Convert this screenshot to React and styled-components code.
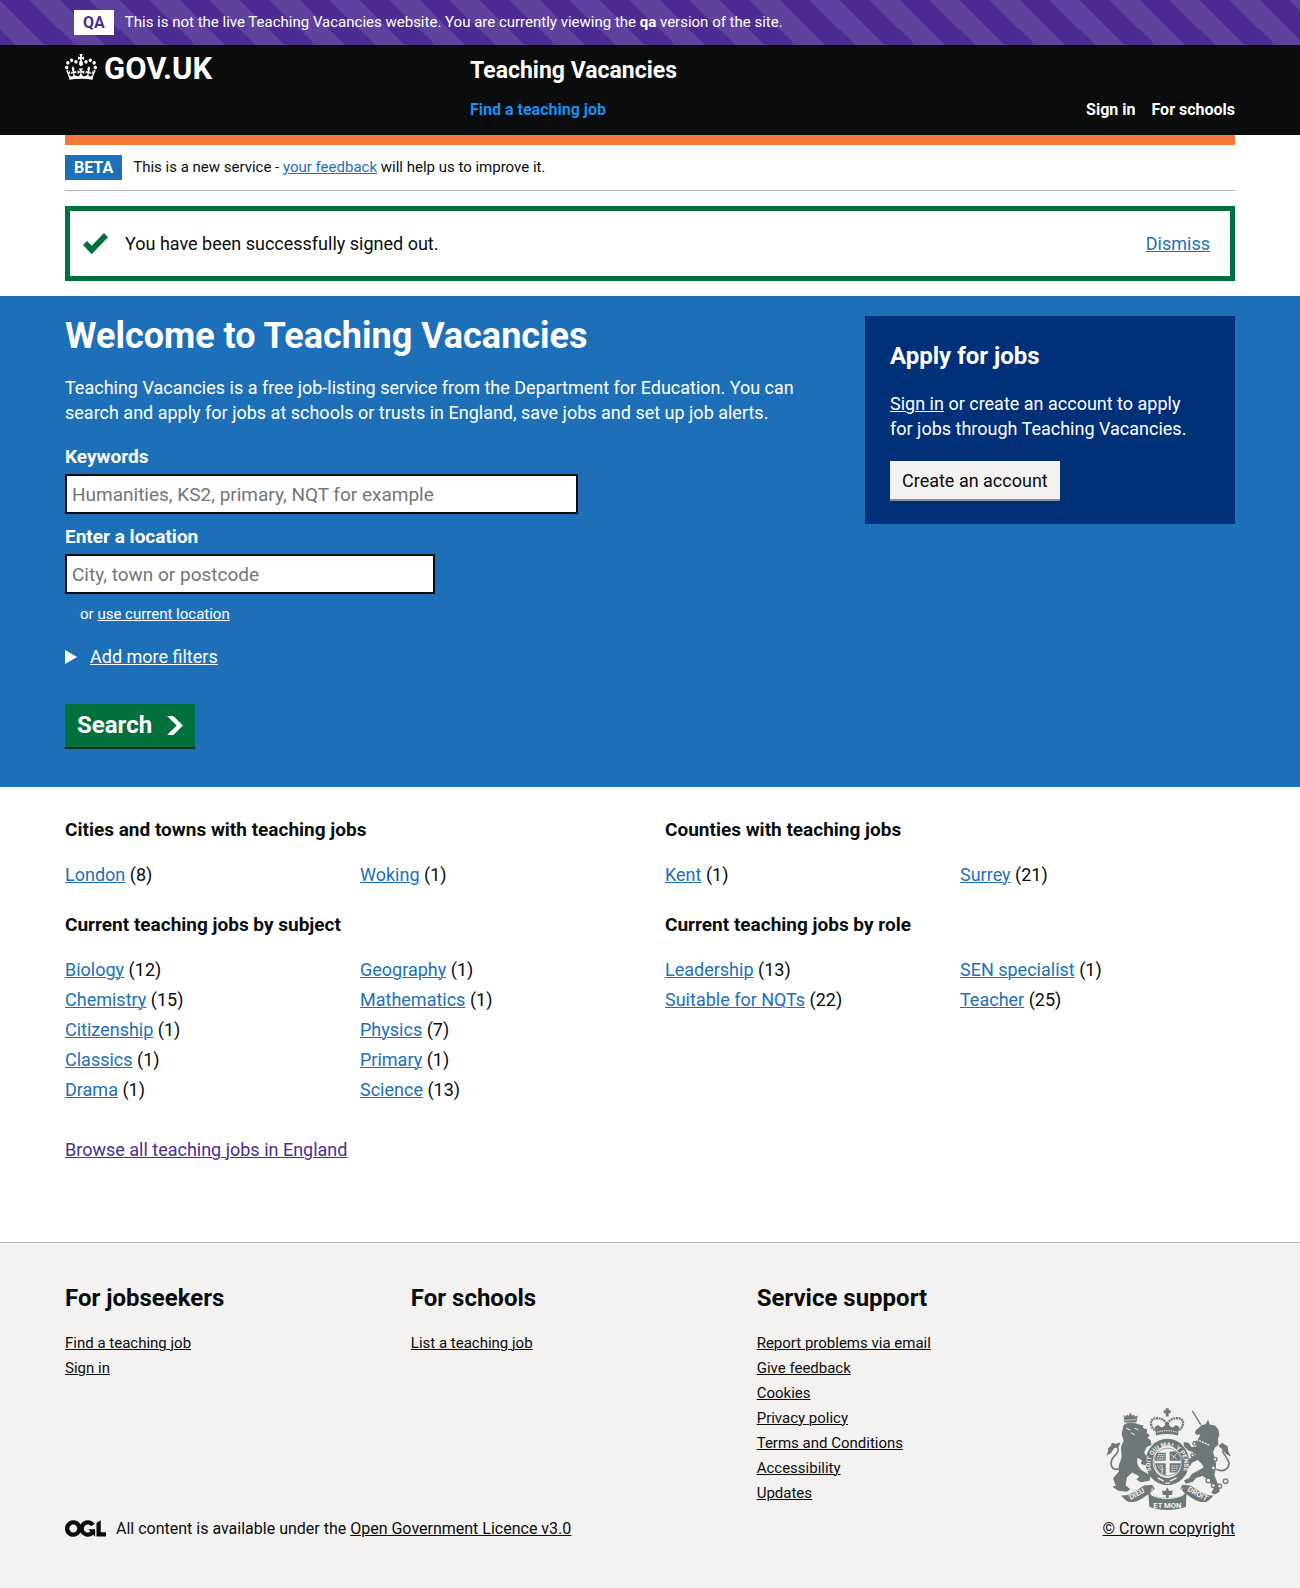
import React from "react";
import styled, { createGlobalStyle, css } from "styled-components";

const color = {
  black: "#0b0c0c",
  white: "#ffffff",
  blue: "#1d70b8",
  darkBlue: "#003078",
  lightBlue: "#1d8feb",
  purple: "#4c2c92",
  green: "#00703c",
  darkGreen: "#002d18",
  orange: "#f47738",
  grey: "#f3f2f1",
  midGrey: "#b1b4b6",
  shadowGrey: "#929191",
  placeholder: "#757575",
  crest: "#6f7779",
};

const Global = createGlobalStyle`
  *, *::before, *::after { box-sizing: border-box; }
  body {
    margin: 0;
    background: ${color.white};
    color: ${color.black};
    font-family: Roboto, "Liberation Sans", sans-serif;
    font-size: 18px;
    line-height: 25px;
  }
  h1, h2, h3, p, ul { margin: 0; padding: 0; }
  ul { list-style: none; }
`;

const Container = styled.div`
  max-width: 1170px;
  margin: 0 auto;
  @media (max-width: 1230px) {
    margin: 0 30px;
  }
`;

const linkColors = {
  blue: color.blue,
  visited: color.purple,
  white: color.white,
  black: color.black,
};

const Link = styled.a`
  color: ${(p) => linkColors[p.$tone || "blue"]};
  text-decoration: underline;
  text-decoration-thickness: 1px;
`;

/* Environment banner */

const EnvBanner = styled.div`
  background-color: ${color.purple};
  background-image: linear-gradient(
    45deg,
    transparent 25%,
    rgba(255, 255, 255, 0.1) 25%,
    rgba(255, 255, 255, 0.1) 50%,
    transparent 50%,
    transparent 75%,
    rgba(255, 255, 255, 0.1) 75%
  );
  background-size: 60px 60px;
  color: ${color.white};
`;

const TagRow = styled.div`
  display: flex;
  align-items: center;
  gap: 11px;
  padding: 10px ${(p) => (p.$inset ? "9px" : "0")};
  font-size: 15px;
`;

const Tag = styled.strong`
  padding: 0 9px;
  font-size: 16px;
  background: ${(p) => (p.$inverse ? color.white : color.blue)};
  color: ${(p) => (p.$inverse ? color.purple : color.white)};
`;

/* Header */

const Header = styled.header`
  background: ${color.black};
  color: ${color.white};
`;

const HeaderGrid = styled(Container)`
  display: grid;
  grid-template-columns: 1fr 2fr;
`;

const Logo = styled.a`
  display: flex;
  align-items: flex-start;
  align-self: start;
  gap: 7px;
  padding-top: 9px;
  color: ${color.white};
  font-size: 31px;
  line-height: 30px;
  font-weight: 700;
  text-decoration: none;
`;

const HeaderContent = styled.div`
  display: flex;
  flex-direction: column;
  gap: 11px;
  padding: 11px 0 13px 15px;
`;

const ServiceName = styled.a`
  color: ${color.white};
  font-size: 23px;
  line-height: 30px;
  font-weight: 700;
  text-decoration: none;
`;

const Nav = styled.nav`
  display: flex;
  gap: 16px;
`;

const NavLink = styled.a`
  color: ${(p) => (p.$active ? color.lightBlue : color.white)};
  font-size: 16px;
  font-weight: 700;
  text-decoration: none;
  ${(p) =>
    p.$active &&
    css`
      margin-right: auto;
    `}
`;

/* Phase banner and notification */

const PhaseBanner = styled(Container)`
  border-top: 10px solid ${color.orange};
  border-bottom: 1px solid ${color.midGrey};
`;

const Notification = styled.div`
  display: flex;
  align-items: center;
  gap: 17px;
  margin: 15px 0;
  padding: 20px 20px 20px 13px;
  border: 5px solid ${color.green};
`;

const NotificationText = styled.p`
  flex: 1;
`;

/* Hero */

const Hero = styled.section`
  padding: 20px 0 40px;
  background: ${color.blue};
  color: ${color.white};
`;

const HeroGrid = styled(Container)`
  display: grid;
  grid-template-columns: repeat(3, 1fr);
  align-items: start;
  column-gap: 30px;
`;

const HeroMain = styled.div`
  grid-column: span 2;
`;

const Title = styled.h1`
  margin-bottom: 19px;
  font-size: 36px;
  line-height: 40px;
`;

const SearchForm = styled.form`
  margin-top: 19px;
`;

const Field = styled.div`
  margin-bottom: 10px;
`;

const Label = styled.label`
  display: block;
  margin-bottom: 5px;
  font-size: 19px;
  font-weight: 700;
`;

const TextInput = styled.input`
  display: block;
  width: ${(p) => (p.$half ? "calc((100% - 30px) / 2)" : "calc(100% * 2 / 3)")};
  height: 40px;
  padding: 5px;
  border: 2px solid ${color.black};
  border-radius: 0;
  background: ${color.white};
  color: ${color.black};
  font: inherit;
  font-size: 19px;
  &::placeholder {
    color: ${color.placeholder};
    opacity: 1;
  }
`;

const Hint = styled.p`
  padding-left: 15px;
  font-size: 15px;
  line-height: 20px;
`;

const Filters = styled.details`
  margin: 20px 0 35px;
`;

const FiltersSummary = styled.summary`
  display: flex;
  align-items: center;
  gap: 13px;
  width: fit-content;
  list-style: none;
  cursor: pointer;
  text-decoration: underline;
  text-decoration-thickness: 1px;
  &::before {
    content: "";
    border: solid transparent;
    border-width: 7px 0 7px 12px;
    border-left-color: currentColor;
  }
`;

const SearchButton = styled.button`
  display: flex;
  align-items: center;
  gap: 15px;
  height: 43px;
  padding: 0 12px;
  border: 0;
  background: ${color.green};
  box-shadow: 0 2px 0 ${color.darkGreen};
  color: ${color.white};
  font: inherit;
  font-size: 24px;
  font-weight: 700;
`;

const ApplyPanel = styled.aside`
  padding: 25px 35px 25px 25px;
  background: ${color.darkBlue};
`;

const PanelTitle = styled.h2`
  margin-bottom: 20px;
  font-size: 24px;
  line-height: 30px;
`;

const CreateButton = styled.button`
  display: block;
  height: 38px;
  margin-top: 20px;
  padding: 0 12px;
  border: 0;
  background: ${color.grey};
  box-shadow: 0 2px 0 ${color.shadowGrey};
  color: ${color.black};
  font: inherit;
`;

/* Job facets */

const FacetSection = styled(Container)`
  padding: 30px 0 80px;
`;

const FacetGrid = styled.div`
  display: grid;
  grid-template-columns: 1fr 1fr;
  gap: 20px 30px;
  margin-bottom: 30px;
`;

const FacetTitle = styled.h3`
  margin-bottom: 20px;
  font-size: 19px;
  line-height: 25px;
`;

const FacetList = styled.ul`
  columns: 2;
  column-gap: 20px;
`;

const FacetItem = styled.li`
  padding-bottom: 5px;
  break-inside: avoid;
`;

/* Footer */

const Footer = styled.footer`
  padding: 40px 0 48px;
  border-top: 1px solid ${color.midGrey};
  background: ${color.grey};
  font-size: 15px;
`;

const FooterRow = styled(Container)`
  display: flex;
  align-items: flex-end;
`;

const FooterMain = styled.div`
  flex: 1;
`;

const FooterNav = styled.div`
  display: grid;
  grid-template-columns: repeat(3, 1fr);
  margin-bottom: 10px;
`;

const FooterTitle = styled.h2`
  margin-bottom: 18px;
  font-size: 24px;
  line-height: 30px;
`;

const Licence = styled.div`
  display: flex;
  align-items: center;
  gap: 10px;
  font-size: 16px;
`;

const Copyright = styled.a`
  display: flex;
  flex-direction: column;
  align-items: center;
  gap: 6px;
  color: ${color.black};
  font-size: 16px;
  text-decoration-thickness: 1px;
`;

/* Drawings */

const Crown = () => (
  <svg width="32" height="26" viewBox="0 0 132 97" preserveAspectRatio="none" aria-hidden="true">
    <path
      fill="currentColor"
      fillRule="evenodd"
      d="M25 30.2c3.5 1.5 7.7-.2 9.1-3.7 1.5-3.6-.2-7.8-3.9-9.2-3.6-1.4-7.6.3-9.1 3.9-1.4 3.5.3 7.5 3.9 9zM9 39.5c3.6 1.5 7.8-.2 9.2-3.7 1.5-3.6-.2-7.8-3.9-9.1-3.6-1.5-7.6.2-9.1 3.8-1.4 3.5.3 7.5 3.8 9zM4.4 57.2c3.5 1.5 7.7-.2 9.1-3.8 1.5-3.6-.2-7.7-3.9-9.1-3.5-1.5-7.6.3-9.1 3.8-1.4 3.5.3 7.6 3.9 9.1zm38.3-21.4c3.5 1.5 7.7-.2 9.1-3.8 1.5-3.6-.2-7.7-3.9-9.1-3.6-1.5-7.6.3-9.1 3.8-1.3 3.6.4 7.7 3.9 9.1zm64.4-5.6c-3.6 1.5-7.8-.2-9.1-3.7-1.5-3.6.2-7.8 3.8-9.2 3.6-1.4 7.7.3 9.2 3.9 1.3 3.5-.4 7.5-3.9 9zm15.9 9.3c-3.6 1.5-7.7-.2-9.1-3.7-1.5-3.6.2-7.8 3.7-9.1 3.6-1.5 7.7.2 9.2 3.8 1.5 3.5-.3 7.5-3.8 9zm4.7 17.7c-3.6 1.5-7.8-.2-9.2-3.8-1.5-3.6.2-7.7 3.9-9.1 3.6-1.5 7.7.3 9.2 3.8 1.3 3.5-.4 7.6-3.9 9.1zM89.3 35.8c-3.6 1.5-7.8-.2-9.2-3.8-1.4-3.6.2-7.7 3.9-9.1 3.6-1.5 7.7.3 9.2 3.8 1.4 3.6-.3 7.7-3.9 9.1zM69.7 17.7l8.9 4.7V9.3l-8.9 2.8c-.2-.3-.5-.6-.9-.9L72.4 0H59.6l3.5 11.2c-.3.3-.6.5-.9.9l-8.8-2.8v13.1l8.8-4.7c.3.3.6.7.9.9l-5 15.4v.1c-.2.8-.4 1.6-.4 2.4 0 4.1 3.1 7.5 7 8.1h.2c.3 0 .7.1 1 .1.4 0 .7 0 1-.1h.2c4-.6 7.1-4.1 7.1-8.1 0-.8-.1-1.7-.4-2.4V34l-5.1-15.4c.4-.2.7-.6 1-.9zM66 92.8c16.9 0 32.8 1.1 47.1 3.2 4-16.9 8.9-26.7 14-33.5l-9.6-3.4c1 4.9 1.1 7.2 0 10.2-1.5-1.4-3-4.3-4.2-8.7L108.6 76c2.8-2 5-3.2 7.5-3.3-4.4 9.4-10 11.9-13.6 11.2-4.3-.8-6.3-4.6-5.6-7.9 1-4.7 5.7-5.9 8-.5 4.3-8.7-3-11.4-7.6-8.8 7.1-7.2 7.9-13.5 2.1-21.1-8 6.1-8.1 12.3-4.5 20.8-4.7-5.4-12.1-2.5-9.5 6.2 3.4-5.2 7.9-2 7.2 3.1-.6 4.3-6.4 7.8-13.5 7.2-10.3-.9-10.9-8-11.2-13.8 2.5-.5 7.1 1.8 11 7.3L80.2 60c-4.1 4.4-8 5.3-12.3 5.4 1.4-4.4 8-11.6 8-11.6H55.5s6.4 7.2 7.9 11.6c-4.2-.1-8-1-12.3-5.4l1.4 16.4c3.9-5.5 8.5-7.7 10.9-7.3-.3 5.8-.9 12.8-11.1 13.8-7.2.6-12.9-2.9-13.5-7.2-.7-5 3.8-8.3 7.1-3.1 2.7-8.7-4.6-11.6-9.4-6.2 3.7-8.5 3.6-14.7-4.6-20.8-5.8 7.6-5 13.9 2.2 21.1-4.7-2.6-11.9.1-7.7 8.8 2.3-5.5 7.1-4.2 8.1.5.7 3.3-1.3 7.1-5.7 7.9-3.5.7-9-1.8-13.5-11.2 2.5.1 4.7 1.3 7.5 3.3l-4.7-15.4c-1.2 4.4-2.7 7.2-4.3 8.7-1.1-3-.9-5.3 0-10.2l-9.5 3.4c5 6.9 9.9 16.7 14 33.5 14.8-2.1 30.8-3.2 47.7-3.2z"
    />
  </svg>
);

const Tick = () => (
  <svg width="25" height="25" viewBox="0 0 25 25" aria-hidden="true">
    <path fill={color.green} d="M25,6.2L8.7,23.2L0,14.1l4-4.2l4.7,4.9L21,2L25,6.2z" />
  </svg>
);

const Chevron = () => (
  <svg width="16" height="19" viewBox="0 0 33 40" preserveAspectRatio="none" aria-hidden="true">
    <path fill="currentColor" d="M0 0h13l20 20-20 20H0l20-20z" />
  </svg>
);

const OglLogo = () => (
  <svg width="41" height="17" viewBox="0 0 483.2 195.7" role="img" aria-label="OGL">
    <path
      fill="currentColor"
      d="M421.5 142.8V.1l-50.7 32.3v161.1h112.4v-50.7zm-122.3-9.6A47.12 47.12 0 0 1 221 97.8c0-26 21.1-47.1 47.1-47.1 16.7 0 31.4 8.7 39.7 21.8l42.7-27.2A97.63 97.63 0 0 0 268.1 0c-36.5 0-68.3 20.1-85.1 49.7A98 98 0 0 0 97.8 0C43.9 0 0 43.9 0 97.8s43.9 97.8 97.8 97.8c36.5 0 68.3-20.1 85.1-49.7a97.76 97.76 0 0 0 149.6 25.4l19.4 22.2h3v-87.8h-80l24.3 27.5zM97.8 145c-26 0-47.1-21.1-47.1-47.1s21.1-47.1 47.1-47.1 47.1 21.1 47.1 47.1S123.8 145 97.8 145"
    />
  </svg>
);

const CrestLetters = styled.text`
  fill: ${color.grey};
  font-size: ${(p) => (p.$small ? "19px" : "23px")};
  font-weight: 700;
  text-anchor: middle;
`;

const Crest = () => (
  <svg width="125" height="102" viewBox="50 47 375 308" aria-hidden="true" fill={color.crest}>
    {/* lion */}
    <path d="M102 98C112 90 132 90 146 96l16 4-2 7 14 6-3 8 10 9-7 7 10 8 2 14-14 6-8 16 8 14 6 20-8 6-16-5 3-11-13-8c-4 16 2 30 16 40l24 14-4 16-26 4-14-8 10-9-22-12-16 14-4 24 14 12-10 8-26-3-18-12 10-4-8-21 18-22c-4-14 4-28 8-42l-2-32 8-18-6-20z" />
    <path d="M103 70l5 4 5-6 4 4 6-8 5 8 5-4 3 6 7-3-3 18-34 1zM122 62v8" stroke={color.crest} strokeWidth="2" />
    <path d="M106 84l33-2" stroke={color.grey} strokeWidth="2" />
    <path d="M110 108l12 6M136 108l10 5M124 122l12 6" stroke={color.grey} strokeWidth="3" />
    <path d="M92 228C66 244 54 212 76 190c14-14 12-32-4-24" fill="none" stroke={color.crest} strokeWidth="5" />
    <path d="M51 191l5-18-2-4 10-8 2-9 12 3 14-4-4 12-14 4-10 16z" />
    {/* unicorn */}
    <path d="M309 55l26 42" stroke={color.crest} strokeWidth="4" />
    <path d="M317 124L320 114 338 98 350 96 357 82 362 97 378 100 388 112 391 128 387 140 388 158 378 166 372 180 378 200 381 218 378 240 376 250 390 284 392 300 378 308 366 304 374 290 358 264 340 252 320 258 312 270 290 276 284 266 300 258 308 246 330 234 344 226 336 214 326 204 308 212 302 224 292 218 300 200 320 188 310 180 298 176 284 162 283 150 298 152 307 165 322 163 318 150 330 136 334 126 324 128z" />
    <path d="M322 142l38 17" stroke={color.grey} strokeWidth="4" strokeDasharray="6 3" />
    <path d="M382 232c26 12 46-8 34-30-10-16-20-22-10-34" fill="none" stroke={color.crest} strokeWidth="5" />
    <path d="M388 162l12-10 8 6 8 4 2 16 9 16-16-8-10-14z" />
    <g fill={color.grey} stroke={color.crest} strokeWidth="4">
      <circle cx="358" cy="266" r="7" />
      <circle cx="373" cy="281" r="6" />
      <circle cx="392" cy="283" r="6" />
      <circle cx="410" cy="268" r="7" />
      <circle cx="378" cy="202" r="6" />
      <circle cx="373" cy="228" r="6" />
      <circle cx="310" cy="190" r="5" />
      <circle cx="316" cy="154" r="5" />
    </g>
    {/* royal crown */}
    <path d="M229 48h9v6h6v9h-6v10h-9v-10h-6v-9h6z" />
    <g fill="none" stroke={color.crest} strokeWidth="7" strokeDasharray="6 2">
      <path d="M196 114C176 96 184 76 204 78c16 0 26 8 29 24" />
      <path d="M270 114c20-18 12-38-8-36-16 0-26 8-29 24" />
    </g>
    <path d="M196 104l10-6 10 8 8-4 9-16 9 16 8 4 10-8 10 6-4 26c-22-6-44-6-66 0z" />
    <path d="M203 120c20-6 40-6 60 0" fill="none" stroke={color.grey} strokeWidth="3" strokeDasharray="4 3" />
    {/* garter */}
    <ellipse cx="234" cy="210" rx="55" ry="59" fill="none" stroke={color.crest} strokeWidth="22" />
    <circle cx="235" cy="210" r="42" fill={color.grey} stroke={color.crest} strokeWidth="2" />
    <path d="M203 182h26v24h-32c0-10 2-18 6-24zM241 214h34c-2 12-8 22-14 28h-20zM241 206v-28h20c8 7 13 17 14 28zM229 214v36c-18-4-30-18-32-36z" />
    <path d="M206 188h20M204 194h22M202 201h24M246 188l18 14M262 184l-14 18M246 222h22M246 229h20M246 236h15M204 220l18 22M211 219l12 16M218 218v28" stroke={color.grey} strokeWidth="3" strokeDasharray="5 2" />
    <path id="garter" d="M186 236A51 54 0 1 1 282 236" fill="none" />
    <CrestLetters $small>
      <textPath href="#garter" startOffset="50%">SOIT QUI MAL Y PENSE</textPath>
    </CrestLetters>
    <path d="M205 258l18 10M262 258l-20 10M228 274h14" stroke={color.grey} strokeWidth="4" />
    {/* plant badge and ribbon */}
    <path d="M234 286l6 12 10-2-2 14h-10v10h-8v-10h-10l-2-14 10 2z" />
    <path d="M94 311c30 2 48-18 70-30l24-2 8 12-16 14c-20 12-36 28-58 26-10 0-18-10-28-20zM374 311c-30 2-48-18-70-30l-24-2-8 12 16 14c20 12 36 28 58 26 10 0 18-10 28-20z" />
    <path d="M176 300l10 10c32 12 64 12 96 0l10-10-2 46c-38 12-74 12-110 0z" />
    <path d="M186 310c32 14 64 14 96 0" fill="none" stroke={color.grey} strokeWidth="3" />
    <path d="M188 288v18M278 288v18" stroke={color.grey} strokeWidth="3" />
    <CrestLetters x="145" y="313" transform="rotate(-29 145 313)">DIEU</CrestLetters>
    <CrestLetters x="234" y="348">ET MON</CrestLetters>
    <CrestLetters x="322" y="313" transform="rotate(29 322 313)">DROIT</CrestLetters>
  </svg>
);

/* Content */

const facets = [
  { title: "Cities and towns with teaching jobs", items: [["London", 8], ["Woking", 1]] },
  { title: "Counties with teaching jobs", items: [["Kent", 1], ["Surrey", 21]] },
  {
    title: "Current teaching jobs by subject",
    items: [
      ["Biology", 12],
      ["Chemistry", 15],
      ["Citizenship", 1],
      ["Classics", 1],
      ["Drama", 1],
      ["Geography", 1],
      ["Mathematics", 1],
      ["Physics", 7],
      ["Primary", 1],
      ["Science", 13],
    ],
  },
  {
    title: "Current teaching jobs by role",
    items: [
      ["Leadership", 13],
      ["Suitable for NQTs", 22],
      ["SEN specialist", 1],
      ["Teacher", 25],
    ],
  },
];

const footerColumns = [
  { title: "For jobseekers", links: ["Find a teaching job", "Sign in"] },
  { title: "For schools", links: ["List a teaching job"] },
  {
    title: "Service support",
    links: [
      "Report problems via email",
      "Give feedback",
      "Cookies",
      "Privacy policy",
      "Terms and Conditions",
      "Accessibility",
      "Updates",
    ],
  },
];

export default function App() {
  return (
    <>
      <Global />
      <EnvBanner>
        <Container>
          <TagRow $inset>
            <Tag $inverse>QA</Tag>
            <p>
              This is not the live Teaching Vacancies website. You are currently viewing the{" "}
              <strong>qa</strong> version of the site.
            </p>
          </TagRow>
        </Container>
      </EnvBanner>

      <Header>
        <HeaderGrid>
          <Logo href="#">
            <Crown />
            GOV.UK
          </Logo>
          <HeaderContent>
            <ServiceName href="#">Teaching Vacancies</ServiceName>
            <Nav>
              <NavLink href="#" $active>
                Find a teaching job
              </NavLink>
              <NavLink href="#">Sign in</NavLink>
              <NavLink href="#">For schools</NavLink>
            </Nav>
          </HeaderContent>
        </HeaderGrid>
      </Header>

      <PhaseBanner>
        <TagRow>
          <Tag>BETA</Tag>
          <p>
            This is a new service - <Link href="#">your feedback</Link> will help us to improve it.
          </p>
        </TagRow>
      </PhaseBanner>

      <main>
        <Container>
          <Notification role="status">
            <Tick />
            <NotificationText>You have been successfully signed out.</NotificationText>
            <Link href="#">Dismiss</Link>
          </Notification>
        </Container>

        <Hero>
          <HeroGrid>
            <HeroMain>
              <Title>Welcome to Teaching Vacancies</Title>
              <p>
                Teaching Vacancies is a free job-listing service from the Department for Education.
                You can search and apply for jobs at schools or trusts in England, save jobs and set
                up job alerts.
              </p>
              <SearchForm onSubmit={(e) => e.preventDefault()}>
                <Field>
                  <Label htmlFor="keyword">Keywords</Label>
                  <TextInput
                    id="keyword"
                    type="text"
                    placeholder="Humanities, KS2, primary, NQT for example"
                  />
                </Field>
                <Field>
                  <Label htmlFor="location">Enter a location</Label>
                  <TextInput id="location" type="text" $half placeholder="City, town or postcode" />
                </Field>
                <Hint>
                  or{" "}
                  <Link href="#" $tone="white">
                    use current location
                  </Link>
                </Hint>
                <Filters>
                  <FiltersSummary>Add more filters</FiltersSummary>
                </Filters>
                <SearchButton type="submit">
                  Search
                  <Chevron />
                </SearchButton>
              </SearchForm>
            </HeroMain>
            <ApplyPanel>
              <PanelTitle>Apply for jobs</PanelTitle>
              <p>
                <Link href="#" $tone="white">
                  Sign in
                </Link>{" "}
                or create an account to apply for jobs through Teaching Vacancies.
              </p>
              <CreateButton type="button">Create an account</CreateButton>
            </ApplyPanel>
          </HeroGrid>
        </Hero>

        <FacetSection>
          <FacetGrid>
            {facets.map((facet) => (
              <section key={facet.title}>
                <FacetTitle>{facet.title}</FacetTitle>
                <FacetList>
                  {facet.items.map(([name, count]) => (
                    <FacetItem key={name}>
                      <Link href="#">{name}</Link> ({count})
                    </FacetItem>
                  ))}
                </FacetList>
              </section>
            ))}
          </FacetGrid>
          <p>
            <Link href="#" $tone="visited">
              Browse all teaching jobs in England
            </Link>
          </p>
        </FacetSection>
      </main>

      <Footer>
        <FooterRow>
          <FooterMain>
            <FooterNav>
              {footerColumns.map((column) => (
                <div key={column.title}>
                  <FooterTitle>{column.title}</FooterTitle>
                  <ul>
                    {column.links.map((label) => (
                      <li key={label}>
                        <Link href="#" $tone="black">
                          {label}
                        </Link>
                      </li>
                    ))}
                  </ul>
                </div>
              ))}
            </FooterNav>
            <Licence>
              <OglLogo />
              <p>
                All content is available under the{" "}
                <Link href="#" $tone="black">
                  Open Government Licence v3.0
                </Link>
              </p>
            </Licence>
          </FooterMain>
          <Copyright href="#">
            <Crest />
            <span>© Crown copyright</span>
          </Copyright>
        </FooterRow>
      </Footer>
    </>
  );
}
